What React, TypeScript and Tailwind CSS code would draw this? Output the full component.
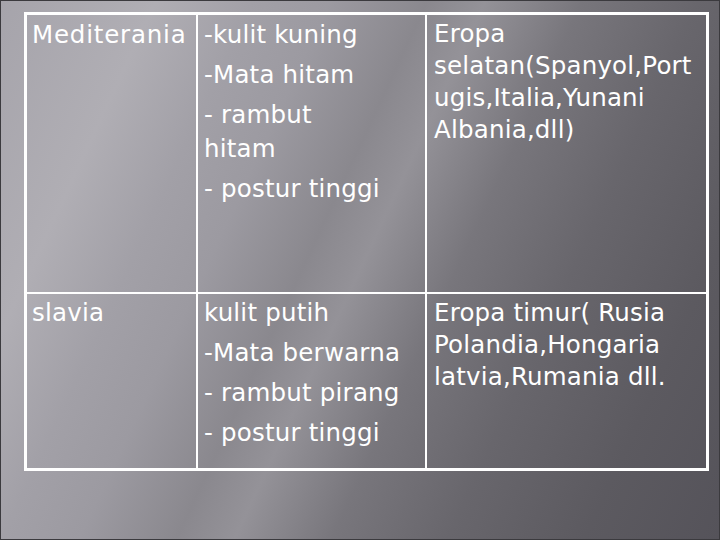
const font = { fontFamily: '"DejaVu Sans", "Liberation Sans", sans-serif' };

function Para({ lines }: { lines: string[] }) {
  return (
    <div className="mt-[6px] first:mt-0">
      {lines.map((l) => (
        <div key={l} className="whitespace-pre leading-[34px]">
          {l}
        </div>
      ))}
    </div>
  );
}

export default function App() {
  return (
    <div
      className="w-[720px] h-[540px] overflow-hidden border border-[#3b3a3e] bg-[linear-gradient(115deg,#a6a4ab_0%,#b0aeb4_16%,#a2a0a7_26%,#9c9aa1_34%,#8a888e_44%,#949298_50%,#78767c_60%,#68666c_72%,#5c5a60_86%,#55535a_100%)] pl-[23px] pt-[11px]"
      style={font}
    >
      <div className="w-[685px] h-[459px] border-[3px] border-white grid grid-cols-[171px_229px_1fr] grid-rows-[279px_1fr] text-white text-[24.5px] tracking-[0.2px] whitespace-nowrap">
        {/* row 1 */}
        <div className="border-r-2 border-b-2 border-white pl-[5px] pt-[3px]">
          <div className="leading-[34px] tracking-[0.8px]">Mediterania</div>
        </div>
        <div className="border-r-2 border-b-2 border-white pl-[6px] pt-[3px]">
          <Para lines={['-kulit kuning']} />
          <Para lines={['-Mata hitam']} />
          <Para lines={['- rambut', 'hitam']} />
          <Para lines={['- postur tinggi']} />
        </div>
        <div className="border-b-2 border-white pl-[7px] pt-[3px] leading-[32px]">
          <div>Eropa</div>
          <div>selatan(Spanyol,Port</div>
          <div>ugis,Italia,Yunani</div>
          <div>Albania,dll)</div>
        </div>

        {/* row 2 */}
        <div className="border-r-2 border-white pl-[5px] pt-[2px]">
          <div className="leading-[34px]">slavia</div>
        </div>
        <div className="border-r-2 border-white pl-[6px] pt-[2px]">
          <Para lines={['kulit putih']} />
          <Para lines={['-Mata berwarna']} />
          <Para lines={['- rambut pirang']} />
          <Para lines={['- postur tinggi']} />
        </div>
        <div className="pl-[7px] pt-[3px] leading-[32px]">
          <div className="whitespace-pre">Eropa timur( Rusia</div>
          <div>Polandia,Hongaria</div>
          <div>latvia,Rumania dll.</div>
        </div>
      </div>
    </div>
  );
}
